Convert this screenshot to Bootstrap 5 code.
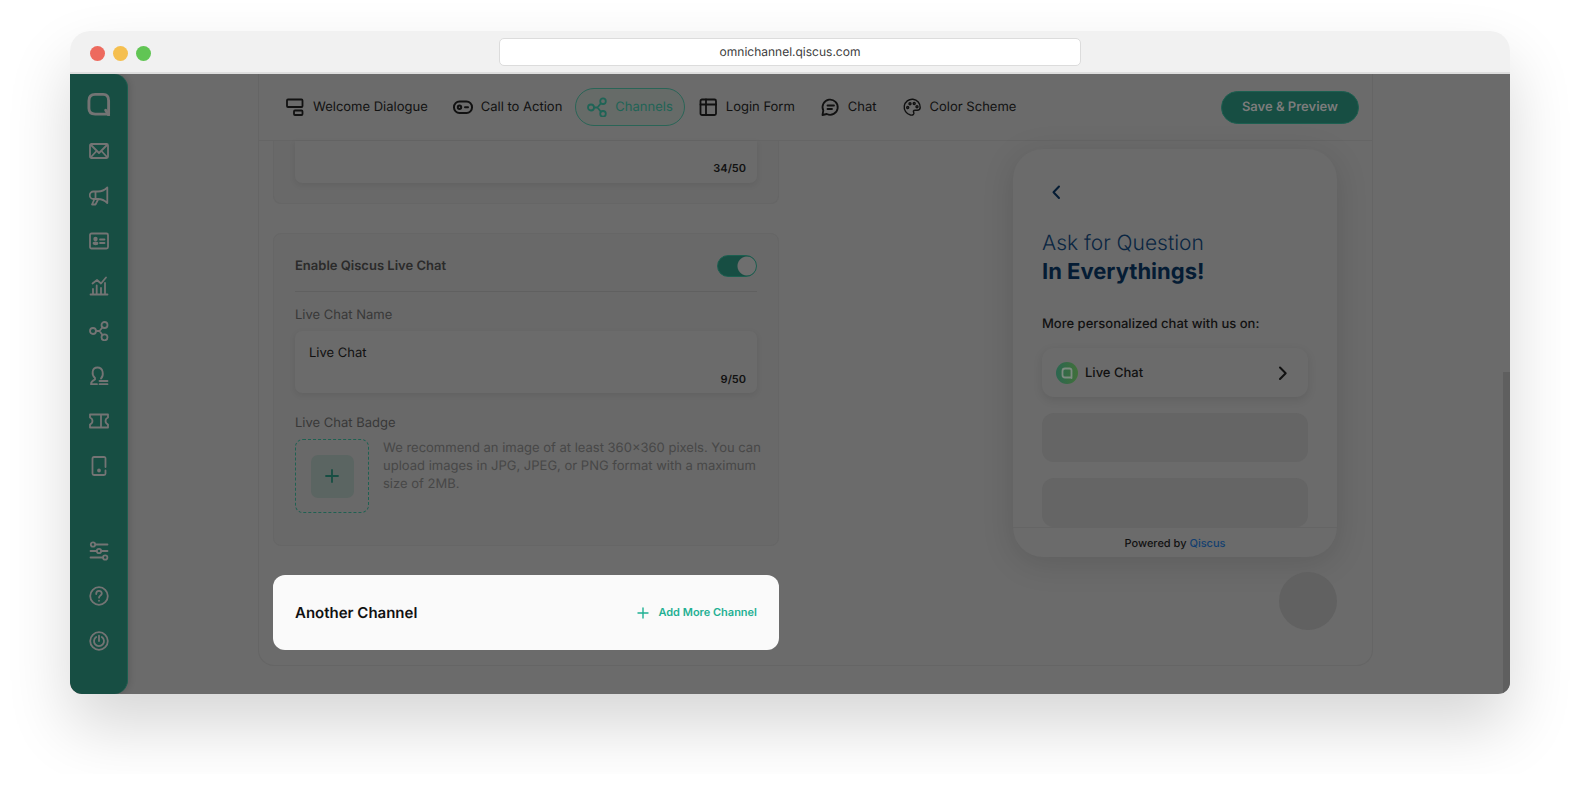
<!DOCTYPE html>
<html lang="en">
<head>
<meta charset="utf-8">
<meta name="viewport" content="width=device-width, initial-scale=1">
<title>Qiscus Omnichannel</title>
<link href="https://cdn.jsdelivr.net/npm/bootstrap@5.3.0/dist/css/bootstrap.min.css" rel="stylesheet">
<style>
:root{--dim:#6b6b6b;--line:#656565;--soft:#696969;--teal:#174e43;--teal-line:#1c5f50;--ink:#111}
body{font-family:Inter,"Liberation Sans",sans-serif;font-size:13px;line-height:18px;text-rendering:geometricPrecision;background:#fff;color:var(--ink);padding:31px 70px 80px}
svg{fill:none;stroke:currentColor;stroke-width:1.8;stroke-linecap:round;stroke-linejoin:round;flex:none;display:block}
a{color:inherit;text-decoration:none}
input,button{text-rendering:inherit}
.browser{border-radius:20px 20px 12px 12px;box-shadow:0 32px 64px rgba(0,0,0,.16)}
.titlebar{background:#f1f1f1;border-bottom:2px solid #dedede;border-radius:20px 20px 0 0;height:43px;padding:0 20px}
.dot{width:15px;height:15px}
.lights,.balance{width:62px}
.address{width:582px;height:28px;border:1px solid #dcdcdc;border-radius:5px;font-size:12px;color:#3c3c3c;background:#fff}
.screen{background:var(--dim);border-radius:0 0 12px 12px;overflow:hidden}
.sidebar{width:58px;background:var(--teal);color:#747474;border-right:1px solid var(--teal-line);border-radius:0 14px 14px 12px;padding:18px 0 43px;box-shadow:2px 0 6px rgba(0,0,0,.12)}
.sidebar .icons{gap:25px}
.workspace{padding:0 130px 28px}
.panel{border:1px solid var(--line);border-top:0;border-radius:0 0 16px 16px}
.tabs{height:67px;border-bottom:1px solid var(--line);padding:0 13px 0 14px}
.tab-list{gap:1px}
.tab{height:38px;padding:0 11px;border:1px solid transparent;border-radius:19px;gap:8px}
.tab.active{color:#1f6456;border-color:#2a6557;background:#666b68}
.save{height:33px;padding:0 20px;border-radius:17px;background:var(--teal);border:1px solid var(--teal-line);color:#7c7c7c;font-size:13px;font-weight:600;line-height:18px}
.save:hover{background:var(--teal);color:#999}
.columns{padding:0 35px 15px 14px}
.settings{width:506px;gap:29px}
.box{background:var(--soft);border:1px solid #666;border-radius:8px;padding:21px 21px 32px}
.box.cut{border-top:0;border-radius:0 0 8px 8px;padding-top:0;padding-bottom:20px}
.field{background:var(--dim);border-radius:7px;box-shadow:0 2px 6px rgba(0,0,0,.08);padding:13px 11px 5px 14px}
.field.cut{border-radius:0 0 7px 7px;padding-top:18px;padding-bottom:6px}
.field input{background:transparent;border:0;padding:0;height:18px;color:var(--ink);font-size:13px;outline:0}
.counter{font-size:11px;font-weight:600}
.toggle-row{height:37px;padding-bottom:15px;border-bottom:1px solid #606060;color:#2b2b2b}
.toggle{appearance:none;width:40px;height:22px;border-radius:11px;border:1px solid var(--teal-line);background:radial-gradient(circle at 29px 10px,#6e6e6e 9px,var(--teal) 10px);margin:0}
.field-title{margin:14px 0 7px}
.badge-title{margin:21px 0 7px}
.badge-row{gap:14px;margin-right:-10px}
.muted{color:#383838}
.hint{color:#474747}
.upload{width:74px;height:74px;border:1px dashed #1f6152;border-radius:8px;cursor:pointer}
.upload span{width:43px;height:43px;border-radius:7px;background:#5b6562;color:var(--teal)}
.another{background:#fafafa;border-radius:12px;height:75px;padding:0 22px;color:#111}
.another h2{font-size:15px;line-height:20px;font-weight:600}
.add{font-size:11px;font-weight:600;color:#1fb093;gap:8px}
.preview{width:324px;padding-top:8px;gap:15px}
.phone{background:var(--dim);border-radius:30px;box-shadow:0 6px 32px rgba(0,0,0,.13);overflow:hidden}
.phone-body{padding:34px 29px 0}
.navy{color:#051c34}
.phone h1{font-size:21px;line-height:28px;font-weight:300;color:#0a2642;margin:24px 0 28px}
.phone h1 strong{font-size:22px;font-weight:700;color:#051c34}
.lead-in{margin-bottom:15px}
.channel{height:49px;border-radius:12px;box-shadow:0 3px 10px rgba(0,0,0,.1);padding:0 19px 0 14px;gap:7px}
.blank{height:49px;border-radius:12px;background:#656565}
.stack{gap:16px}
.powered{height:30px;border-top:1px solid var(--line);font-size:11px}
.powered a{color:#123f70}
.bubble{width:58px;height:58px;background:#616161}
.scrolltrack{width:7px}
.scrollthumb{height:52%;background:#5f5f5f}
</style>
</head>
<body>
<div class="browser">
  <header class="titlebar d-flex align-items-center justify-content-between">
    <div class="lights d-flex gap-2 mt-1">
      <span class="dot rounded-circle" style="background:#ed6a5e"></span>
      <span class="dot rounded-circle" style="background:#f5bf4f"></span>
      <span class="dot rounded-circle" style="background:#61c554"></span>
    </div>
    <input class="address text-center" type="text" value="omnichannel.qiscus.com" aria-label="Address">
    <div class="balance"></div>
  </header>

  <div class="screen d-flex">
    <nav class="sidebar d-flex flex-column align-items-center justify-content-between" aria-label="Main">
      <div class="icons d-flex flex-column align-items-center">
        <a href="#" aria-label="Home"><svg width="24" height="24" viewBox="0 0 25 24" style="stroke-width:3"><path d="M22.500 23V8.500Q22.500 2 17 2H8.500Q2 2 2 8.500V16.500Q2 22.500 8.500 22.500H22"/><path d="M19.500 18.500l3 5"/></svg></a>
        <a href="#" aria-label="Inbox"><svg width="20" height="20" viewBox="0 0 20 20"><rect x="1" y="3" width="18" height="14" rx="1.500"/><path d="M2 4l5.500 5.500L10 12l2.500-2.500L18 4M2.500 15.500l5-5.500M17.500 15.500l-5-5.500"/></svg></a>
        <a href="#" aria-label="Broadcast"><svg width="20" height="20" viewBox="0 0 20 20"><path d="M18.300 1.500v15.500c-3-3-5.500-4-9.300-4H4.500a3.500 3.500 0 0 1 0-7.500H9c3.800 0 6.300-1 9.300-4zM6.500 5.500V13M5.500 13l-2.500 5.500h3.500L9.300 13"/></svg></a>
        <a href="#" aria-label="Contacts"><svg width="20" height="20" viewBox="0 0 20 20"><rect x="1" y="2.500" width="18" height="15" rx="1.500"/><circle cx="6.500" cy="8" r="1.300" fill="currentColor"/><path d="M11 8.500h4.500M11 12h4.500"/><ellipse cx="6.500" cy="12.300" rx="2" ry="1" fill="currentColor"/></svg></a>
        <a href="#" aria-label="Analytics"><svg width="20" height="20" viewBox="0 0 20 20"><path d="M1.500 18.500h17M4 18v-5M7.700 18V9.500M12 18v-6M16 18V7M3.500 7.500L8 4l4 3.500 5-6"/></svg></a>
        <a href="#" aria-label="Integrations"><svg width="20" height="20" viewBox="0 0 20 20"><circle cx="4" cy="10" r="3"/><circle cx="15.500" cy="4" r="3"/><circle cx="15.500" cy="16.300" r="3"/><path d="M7 10h3.500l3-3.700M10.500 10l3 4"/></svg></a>
        <a href="#" aria-label="Agents"><svg width="20" height="20" viewBox="0 0 20 20"><path d="M12 12.500c3-3 2.500-11-3.500-11S2.500 9 6 12v1.500c-2 1-4 1.500-4 4.700h6M10.500 15h8M10.500 18.200h8"/></svg></a>
        <a href="#" aria-label="Tickets"><svg width="20" height="20" viewBox="0 0 20 20"><path d="M1 3.500h18v3c-3.300 1.500-3.300 5.500 0 7v3H1v-3c3.300-1.500 3.300-5.500 0-7zM12 3.500v13"/></svg></a>
        <a href="#" aria-label="Devices"><svg width="20" height="20" viewBox="0 0 20 20"><path d="M16.500 11V2.500Q16.500 1 15 1H5Q3.500 1 3.500 2.500v15Q3.500 19 5 19h10q1.500 0 1.500-1.500V14.500"/><circle cx="10" cy="14.500" r="1" fill="currentColor"/></svg></a>
      </div>
      <div class="icons d-flex flex-column align-items-center">
        <a href="#" aria-label="Settings"><svg width="20" height="20" viewBox="0 0 20 20"><circle cx="4" cy="3.500" r="2.200"/><path d="M6.500 3.500h12M1.500 10H7.500M12.500 10h6M1.500 16.500h12"/><circle cx="10" cy="10" r="2.200"/><circle cx="16.200" cy="16.500" r="2.200"/></svg></a>
        <a href="#" aria-label="Help"><svg width="20" height="20" viewBox="0 0 20 20"><circle cx="10" cy="10" r="8.800"/><path d="M7.200 8c0-4 5.600-4 5.600-.5 0 2-2.800 2-2.800 4.200M10 14.600v.2"/></svg></a>
        <a href="#" aria-label="Log out"><svg width="20" height="20" viewBox="0 0 20 20"><circle cx="10" cy="10" r="8.800"/><path d="M7.200 6a5 5 0 1 0 5.600 0M10 4.700V10"/></svg></a>
      </div>
    </nav>

    <main class="workspace flex-grow-1">
      <div class="panel">
        <div class="tabs d-flex align-items-center justify-content-between">
          <nav class="tab-list d-flex" aria-label="Widget settings">
            <a href="#" class="tab d-flex align-items-center"><svg width="20" height="20" viewBox="0 0 20 20"><rect x="2" y="2.500" width="15.500" height="7.500" rx="1"/><rect x="9" y="13.500" width="8.500" height="4.500" rx="1"/></svg>Welcome Dialogue</a>
            <a href="#" class="tab d-flex align-items-center"><svg width="20" height="20" viewBox="0 0 20 20" style="stroke-width:2"><rect x="1" y="4.500" width="18" height="11.500" rx="5.500"/><circle cx="6.500" cy="10.200" r="1.700"/><path d="M12 10.200h3"/></svg>Call to Action</a>
            <a href="#" class="tab active d-flex align-items-center" aria-current="page"><svg width="20" height="20" viewBox="0 0 20 20"><circle cx="4" cy="10.500" r="3"/><circle cx="16" cy="4.200" r="2.800"/><circle cx="16" cy="16.800" r="2.800"/><path d="M7 10.500h3.500l3.200-4M10.500 10.500l3.200 4"/></svg>Channels</a>
            <a href="#" class="tab d-flex align-items-center"><svg width="20" height="20" viewBox="0 0 20 20"><rect x="2.500" y="2.500" width="15.500" height="15.500" rx="1.500"/><path d="M8 2.500V18M2.500 7.500H18"/></svg>Login Form</a>
            <a href="#" class="tab d-flex align-items-center"><svg width="20" height="20" viewBox="0 0 20 20"><path d="M2.500 18l.8-4.500a7.600 7.600 0 1 1 3.500 3.500zM7.500 8.500h6.500M7.500 12H12"/></svg>Chat</a>
            <a href="#" class="tab d-flex align-items-center"><svg width="20" height="20" viewBox="0 0 20 20" style="stroke-width:1.400"><path d="M8.500 18A8 8 0 1 1 18.200 10.500c0 2.200-1.200 2.700-3 2.700h-2c-1.800 0-2.200 1-1.500 2.200.7 1.400-.5 3.100-3.200 2.600z"/><circle cx="5.700" cy="10.500" r="1"/><circle cx="8" cy="6.700" r="1"/><circle cx="12.200" cy="6.500" r="1"/><circle cx="15" cy="9.700" r="1"/></svg>Color Scheme</a>
          </nav>
          <button type="button" class="btn save">Save &amp; Preview</button>
        </div>

        <div class="columns d-flex justify-content-between">
          <div class="settings d-flex flex-column">
            <section class="box cut">
              <div class="field cut"><div class="counter text-end">34/50</div></div>
            </section>

            <section class="box">
              <div class="toggle-row d-flex align-items-center justify-content-between">
                <label for="enable" class="fw-semibold">Enable Qiscus Live Chat</label>
                <input id="enable" class="toggle" type="checkbox" role="switch" checked>
              </div>
              <label for="name" class="muted d-block field-title">Live Chat Name</label>
              <div class="field">
                <input id="name" class="w-100 d-block" type="text" value="Live Chat">
                <div class="counter text-end mt-2">9/50</div>
              </div>
              <div class="muted badge-title">Live Chat Badge</div>
              <div class="badge-row d-flex">
                <label class="upload d-flex flex-shrink-0 align-items-center justify-content-center" aria-label="Upload badge">
                  <input type="file" class="visually-hidden">
                  <span class="d-flex align-items-center justify-content-center"><svg width="14" height="14" viewBox="0 0 14 14"><path d="M7 1v12M1 7h12"/></svg></span>
                </label>
                <p class="hint mb-0">We recommend an image of at least 360×360 pixels. You can upload images in JPG, JPEG, or PNG format with a maximum size of 2MB.</p>
              </div>
            </section>

            <section class="another d-flex align-items-center justify-content-between">
              <h2 class="mb-0">Another Channel</h2>
              <button type="button" class="add btn p-0 border-0 d-flex align-items-center"><svg width="14" height="14" viewBox="0 0 14 14" style="stroke-width:1.400"><path d="M7 2v10M2 7h10"/></svg>Add More Channel</button>
            </section>
          </div>

          <aside class="preview d-flex flex-column">
            <div class="phone">
              <div class="phone-body">
                <a href="#" class="navy d-inline-block ms-2" aria-label="Back"><svg width="12" height="18" viewBox="0 0 12 18" style="stroke-width:2"><path d="M9 3.500L3.500 9.200 9 15"/></svg></a>
                <h1>Ask for Question<br><strong>In Everythings!</strong></h1>
                <p class="fw-medium lead-in">More personalized chat with us on:</p>
                <div class="stack d-flex flex-column">
                  <a href="#" class="channel d-flex align-items-center fw-medium">
                    <svg width="22" height="22" viewBox="0 0 22 22"><defs><linearGradient id="g"><stop stop-color="#2b6650"/><stop offset="1" stop-color="#41703a"/></linearGradient></defs><circle cx="11" cy="11" r="11" fill="url(#g)" stroke="none"/><path d="M15.500 16V8.500q0-2-2-2H9q-2.500 0-2.500 2.500v4q0 2.500 2.500 2.500h6.500" stroke="#7d8a80"/></svg>
                    <span class="me-auto">Live Chat</span>
                    <svg width="12" height="18" viewBox="0 0 12 18" style="stroke-width:2"><path d="M3 3.500L8.700 9.200 3 15"/></svg>
                  </a>
                  <div class="blank"></div>
                  <div class="blank"></div>
                </div>
              </div>
              <div class="powered d-flex align-items-center justify-content-center fw-medium"><span>Powered by <a href="#">Qiscus</a></span></div>
            </div>
            <div class="bubble rounded-circle align-self-end"></div>
          </aside>
        </div>
      </div>
    </main>
    <div class="scrolltrack d-flex flex-column justify-content-end"><div class="scrollthumb"></div></div>
  </div>
</div>
<script src="https://cdn.jsdelivr.net/npm/bootstrap@5.3.0/dist/js/bootstrap.bundle.min.js"></script>
</body>
</html>
